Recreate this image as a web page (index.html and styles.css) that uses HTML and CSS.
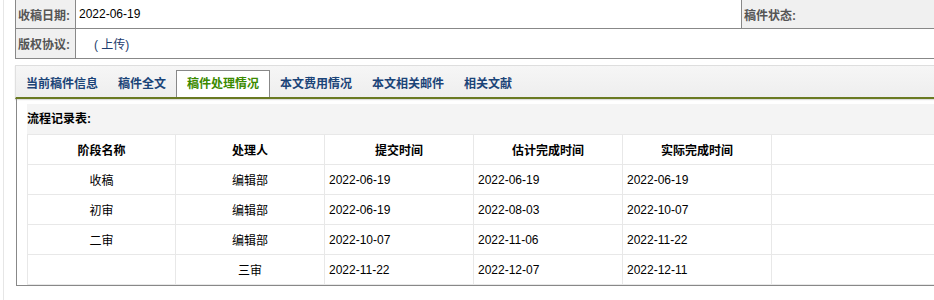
FILE: index.html
```html
<!DOCTYPE html>
<html lang="zh-CN">
<head>
<meta charset="utf-8">
<title>稿件处理情况</title>
<link rel="stylesheet" href="styles.css">
</head>
<body>
<div class="page">
  <table class="info">
    <colgroup><col class="c-lbl"><col class="c-val"><col class="c-lbl2"><col class="c-val2"></colgroup>
    <tr class="r1">
      <th class="lbl">收稿日期:</th>
      <td class="val">2022-06-19</td>
      <th class="lbl">稿件状态:</th>
      <td class="val"></td>
    </tr>
    <tr class="r2">
      <th class="lbl">版权协议:</th>
      <td class="val" colspan="3"><span class="upload">( 上传)</span></td>
    </tr>
  </table>

  <div class="tabs">
    <span class="tab">当前稿件信息</span>
    <span class="tab">稿件全文</span>
    <span class="tab active">稿件处理情况</span>
    <span class="tab">本文费用情况</span>
    <span class="tab">本文相关邮件</span>
    <span class="tab">相关文献</span>
  </div>

  <div class="panel">
    <div class="box">
      <div class="title">流程记录表:</div>
      <table class="flow">
        <colgroup><col class="fc-first"><col class="fc"><col class="fc"><col class="fc"><col class="fc"><col class="fc-last"></colgroup>
        <tr>
          <th>阶段名称</th><th>处理人</th><th>提交时间</th><th>估计完成时间</th><th>实际完成时间</th><th></th>
        </tr>
        <tr>
          <td class="ctr">收稿</td><td class="ctr">编辑部</td><td>2022-06-19</td><td>2022-06-19</td><td>2022-06-19</td><td></td>
        </tr>
        <tr>
          <td class="ctr">初审</td><td class="ctr">编辑部</td><td>2022-06-19</td><td>2022-08-03</td><td>2022-10-07</td><td></td>
        </tr>
        <tr>
          <td class="ctr">二审</td><td class="ctr">编辑部</td><td>2022-10-07</td><td>2022-11-06</td><td>2022-11-22</td><td></td>
        </tr>
        <tr>
          <td class="ctr"></td><td class="ctr">三审</td><td>2022-11-22</td><td>2022-12-07</td><td>2022-12-11</td><td></td>
        </tr>
      </table>
    </div>
  </div>
</div>
</body>
</html>
```

FILE: styles.css
```css
html, body {
  margin: 0;
  padding: 0;
  overflow: hidden;
  background: #fff;
}

body {
  font-family: "Liberation Sans", "Noto Sans CJK SC", sans-serif;
  font-size: 12px;
  color: #000;
}

.page {
  width: 1100px;
  margin-left: 3px;
  border-left: 1px solid #e6e6e6;
  padding-left: 11px;
  min-height: 300px;
}

/* top info table */
.info {
  width: 1085px;
  border-collapse: collapse;
  table-layout: fixed;
}
.c-lbl { width: 60px; }
.c-val { width: 666px; }
.c-lbl2 { width: 300px; }

.info th, .info td {
  border: 1px solid #888;
  padding: 0 0 0 2px;
  text-align: left;
  white-space: nowrap;
}
.info .r1 th, .info .r1 td {
  border-top: none;
  height: 28px;
}
.info .r2 th, .info .r2 td {
  height: 29px;
}
.info .lbl {
  background: #f0f0f0;
  color: #555;
  font-weight: bold;
}
.info .val {
  background: #fff;
  padding-left: 3px;
}
.upload {
  color: #1d3c6e;
  padding-left: 15px;
}

/* tabs */
.tabs {
  margin-top: 6px;
  height: 31px;
  border-top: 1px solid #dedede;
  border-left: 1px solid #e0e0e0;
  border-bottom: 2px solid #6a7a22;
  background: linear-gradient(#f6f6f6, #eeeeee);
  display: flex;
  align-items: flex-end;
  box-shadow: 0 1px 1px #ddd;
}
.tab {
  display: block;
  height: 26px;
  line-height: 27px;
  padding: 0 9px;
  border: 1px solid transparent;
  border-bottom: none;
  color: #1b4478;
  font-weight: bold;
  white-space: nowrap;
}
.tab.active {
  padding: 0 10px;
  background: #fff;
  border-color: #888;
  color: #3b8a00;
}

/* panel */
.panel {
  margin-left: 1px;
  border-left: 1px solid #888;
  border-bottom: 1px solid #888;
  padding: 5px 0 0 10px;
}
.box {
  background: #f4f4f4;
}
.title {
  height: 30px;
  line-height: 30px;
  font-weight: bold;
}

.flow {
  width: 1060px;
  border-collapse: collapse;
  table-layout: fixed;
  background: #fff;
}
.fc-first { width: 148px; }
.fc { width: 149px; }

.flow th, .flow td {
  border: 1px solid #e8e8e8;
  height: 29px;
  padding: 0 0 0 4px;
  text-align: left;
  white-space: nowrap;
}
.flow th {
  text-align: center;
  font-weight: bold;
  padding: 0;
}
.flow td.ctr {
  text-align: center;
  padding: 0;
}
```
